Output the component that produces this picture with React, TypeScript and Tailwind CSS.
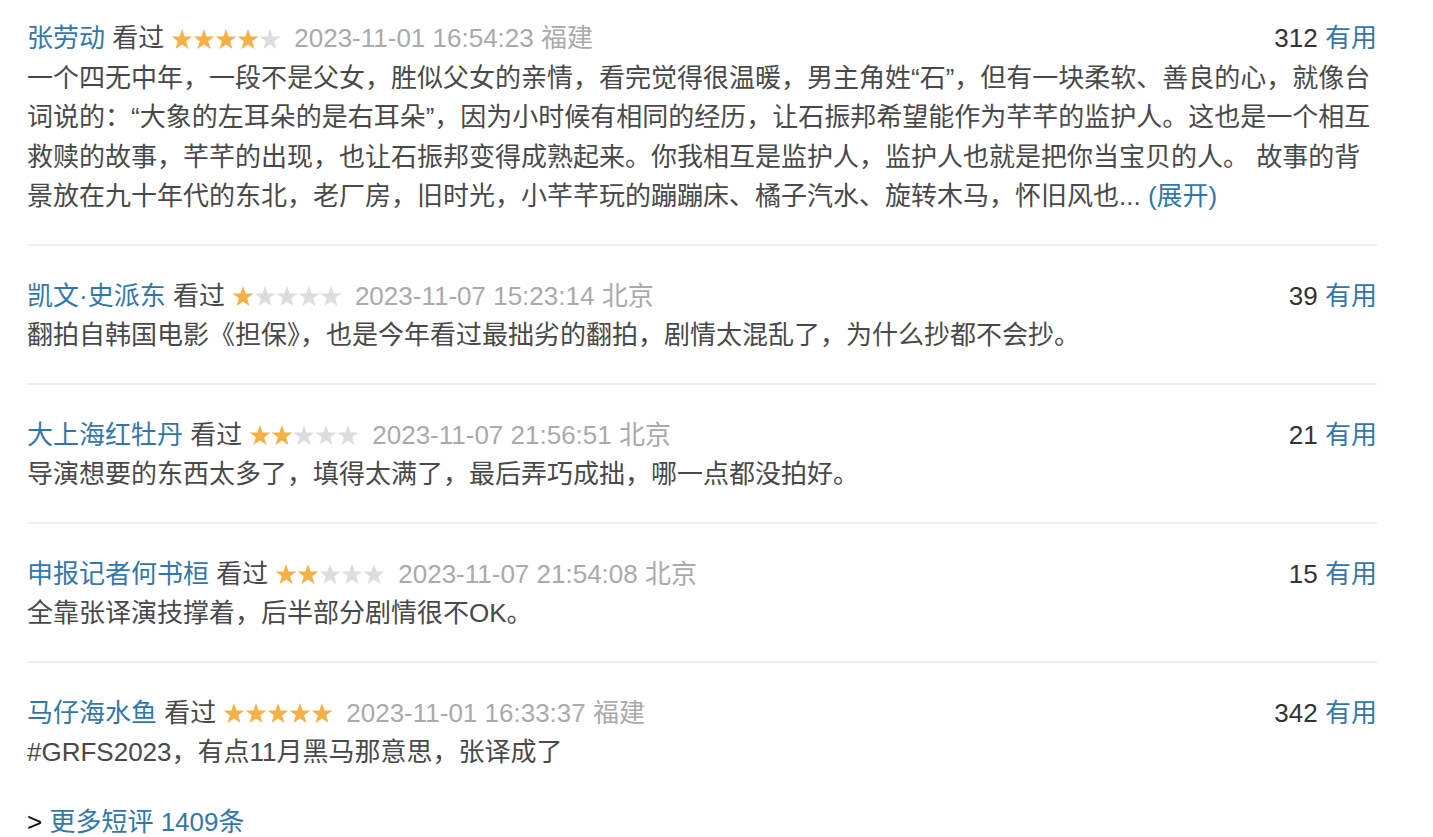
import React from 'react';

type Comment = {
  user: string;
  rating: number;
  time: string;
  location: string;
  votes: number;
  content: string;
  truncated?: boolean;
};

const comments: Comment[] = [
  {
    user: '张劳动',
    rating: 4,
    time: '2023-11-01 16:54:23',
    location: '福建',
    votes: 312,
    content:
      '一个四无中年，一段不是父女，胜似父女的亲情，看完觉得很温暖，男主角姓“石”，但有一块柔软、善良的心，就像台词说的：“大象的左耳朵的是右耳朵”，因为小时候有相同的经历，让石振邦希望能作为芊芊的监护人。这也是一个相互救赎的故事，芊芊的出现，也让石振邦变得成熟起来。你我相互是监护人，监护人也就是把你当宝贝的人。 故事的背景放在九十年代的东北，老厂房，旧时光，小芊芊玩的蹦蹦床、橘子汽水、旋转木马，怀旧风也...',
    truncated: true,
  },
  {
    user: '凯文·史派东',
    rating: 1,
    time: '2023-11-07 15:23:14',
    location: '北京',
    votes: 39,
    content: '翻拍自韩国电影《担保》，也是今年看过最拙劣的翻拍，剧情太混乱了，为什么抄都不会抄。',
  },
  {
    user: '大上海红牡丹',
    rating: 2,
    time: '2023-11-07 21:56:51',
    location: '北京',
    votes: 21,
    content: '导演想要的东西太多了，填得太满了，最后弄巧成拙，哪一点都没拍好。',
  },
  {
    user: '申报记者何书桓',
    rating: 2,
    time: '2023-11-07 21:54:08',
    location: '北京',
    votes: 15,
    content: '全靠张译演技撑着，后半部分剧情很不OK。',
  },
  {
    user: '马仔海水鱼',
    rating: 5,
    time: '2023-11-01 16:33:37',
    location: '福建',
    votes: 342,
    content: '#GRFS2023，有点11月黑马那意思，张译成了',
  },
];

const STAR = '11,0 13.59,7.44 21.46,7.6 15.18,12.36 17.47,19.9 11,15.4 4.53,19.9 6.82,12.36 0.54,7.6 8.41,7.44';

// five stars, the first `rating` filled orange
const Stars = ({ rating }: { rating: number }) => (
  <svg width="110" height="20" viewBox="0 0 110 20" className="ml-[7px] mr-[13px] shrink-0">
    {[0, 1, 2, 3, 4].map((i) => (
      <polygon
        key={i}
        points={STAR}
        transform={`translate(${i * 22} 0)`}
        fill={i < rating ? '#f5b148' : '#dddddd'}
      />
    ))}
  </svg>
);

const CommentItem = ({ c, first, last }: { c: Comment; first: boolean; last: boolean }) => (
  <div
    className={`${first ? 'pt-[19px]' : 'pt-[31px]'} pb-[27px] ${
      last ? '' : 'border-b-2 border-[#ededed]'
    }`}
  >
    <div className="flex justify-between items-center leading-[39.5px]">
      <div className="flex items-center whitespace-nowrap">
        <span className="text-[#3377aa]">{c.user}</span>
        <span className="text-[#494949]">&nbsp;看过</span>
        <Stars rating={c.rating} />
        <span className="text-[#aaaaaa]">
          {c.time} {c.location}
        </span>
      </div>
      <div className="whitespace-nowrap">
        <span className="text-[#333333]">{c.votes} </span>
        <span className="text-[#3377aa]">有用</span>
      </div>
    </div>
    <p className="text-[#494949] leading-[39.5px]">
      {c.content}
      {c.truncated && <span className="text-[#3377aa]"> (展开)</span>}
    </p>
  </div>
);

export default function App() {
  return (
    <div
      className="min-h-screen bg-white text-[26px]"
      style={{ fontFamily: '"Liberation Sans", Arial, "Noto Sans CJK SC", sans-serif' }}
    >
      <div className="ml-[27px] w-[1350px]">
        {comments.map((c, i) => (
          <CommentItem key={i} c={c} first={i === 0} last={i === comments.length - 1} />
        ))}
        <div className="mt-[3px] leading-[39.5px]">
          <span className="text-[#111111]">&gt; </span>
          <span className="text-[#3377aa]">更多短评 1409条</span>
        </div>
      </div>
    </div>
  );
}
